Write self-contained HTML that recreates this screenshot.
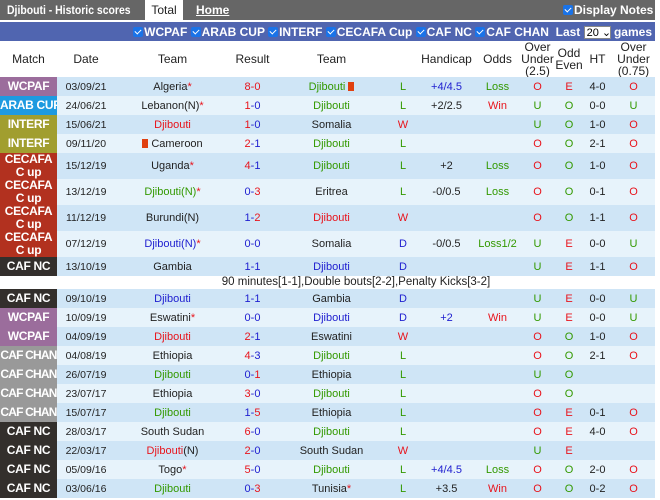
<!DOCTYPE html>
<html><head><meta charset="utf-8"><style>
*{margin:0;padding:0;box-sizing:border-box}
body{width:660px;height:500px;overflow:hidden;background:#fff;font-family:"Liberation Sans",Arial,sans-serif;font-size:11px;color:#222;position:relative}
.top{position:absolute;left:0;top:0;width:655px;height:20px;background:#666;color:#fff;font-weight:bold;font-size:12px}
.top .t{position:absolute;left:7px;top:3px;transform:scaleX(0.87);transform-origin:left;white-space:nowrap}
.top .tab{position:absolute;left:145px;top:0;width:38px;height:21px;background:#fff;color:#222;text-align:center;line-height:20px;font-weight:normal}
.top .home{position:absolute;left:196px;top:3px;text-decoration:underline}
.top .dn{position:absolute;left:563px;top:3px}
.cb{display:inline-block;width:10px;height:10px;background:#1a73e8;border-radius:2px;vertical-align:-1px;margin-right:1px;position:relative}
.cb:after{content:"";position:absolute;left:3px;top:1px;width:3px;height:5px;border:solid #fff;border-width:0 1.5px 1.5px 0;transform:rotate(45deg)}
.flt{position:absolute;left:0;top:22px;width:655px;height:19px;background:#5065b0;color:#fff;font-weight:bold;font-size:12px;white-space:nowrap}
.flt .in{position:absolute;right:3px;top:3px}
.sel{display:inline-block;background:#fff;color:#000;font-weight:normal;width:27px;height:13px;line-height:12px;border:1px solid #888;padding-left:2px;font-size:11px;vertical-align:0}
table{position:absolute;left:0;top:41px;width:655px;border-collapse:collapse;table-layout:fixed}
td,th{text-align:center;padding:0;overflow:hidden;white-space:nowrap}
th{height:36px;font-weight:normal;font-size:12px;line-height:12px;background:#fff}
tr.r td{height:19px}
tr.d td{height:26px}
tr:nth-child(even) td{background:#cfe5f6}
tr:nth-child(odd) td{background:#e7f3fb}
td.m{color:#fff;font-weight:bold;font-size:12px;line-height:13px;letter-spacing:-0.3px}
tr td.w{background:#9b6d9c}tr td.a{background:#1e9ae0}tr td.i{background:#a19e2f}tr td.c{background:#b2311f;white-space:normal}tr td.n{background:#332f2c}tr td.h{background:#999;letter-spacing:-0.8px}
tr.note td{background:#fff!important;height:13px;font-size:11.5px;line-height:13px}
.R{color:#e8141c}.B{color:#2020d0}.G{color:#339900}.dt{font-size:10.5px}
.mk{display:inline-block;width:6px;height:9px;background:#e04010;vertical-align:-1px;margin-left:3px}
</style></head><body>
<div class="top"><span class="t">Djibouti - Historic scores</span><span class="tab">Total</span><span class="home">Home</span><span class="dn"><span class="cb"></span>Display Notes</span></div>
<div class="flt"><div class="in"><span class="cb"></span>WCPAF <span class="cb"></span>ARAB CUP <span class="cb"></span>INTERF <span class="cb"></span>CECAFA Cup <span class="cb"></span>CAF NC <span class="cb"></span>CAF CHAN &nbsp;Last <span class="sel">20 ⌄</span> games</div></div>
<table>
<colgroup><col style="width:57px"><col style="width:58px"><col style="width:115px"><col style="width:45px"><col style="width:113px"><col style="width:30px"><col style="width:57px"><col style="width:45px"><col style="width:35px"><col style="width:28px"><col style="width:29px"><col style="width:43px"></colgroup>
<tr><th>Match</th><th>Date</th><th>Team</th><th>Result</th><th>Team</th><th></th><th>Handicap</th><th>Odds</th><th>Over<br>Under<br>(2.5)</th><th>Odd<br>Even</th><th>HT</th><th>Over<br>Under<br>(0.75)</th></tr>
<tr class="r"><td class="m w">WCPAF</td><td class="dt">03/09/21</td><td>Algeria<span class="R">*</span></td><td><span class="R">8-0</span></td><td class="G">Djibouti<span class="mk"></span></td><td class="G">L</td><td class="B">+4/4.5</td><td class="G">Loss</td><td class="R">O</td><td class="R">E</td><td>4-0</td><td class="R">O</td></tr>
<tr class="r"><td class="m a">ARAB CUP</td><td class="dt">24/06/21</td><td>Lebanon(N)<span class="R">*</span></td><td><span class="R">1</span><span class="B">-0</span></td><td class="G">Djibouti</td><td class="G">L</td><td>+2/2.5</td><td class="R">Win</td><td class="G">U</td><td class="G">O</td><td>0-0</td><td class="G">U</td></tr>
<tr class="r"><td class="m i">INTERF</td><td class="dt">15/06/21</td><td class="R">Djibouti</td><td><span class="R">1</span><span class="B">-0</span></td><td>Somalia</td><td class="R">W</td><td></td><td></td><td class="G">U</td><td class="G">O</td><td>1-0</td><td class="R">O</td></tr>
<tr class="r"><td class="m i">INTERF</td><td class="dt">09/11/20</td><td><span class="mk" style="margin:0 3px 0 0"></span>Cameroon</td><td><span class="R">2</span><span class="B">-1</span></td><td class="G">Djibouti</td><td class="G">L</td><td></td><td></td><td class="R">O</td><td class="G">O</td><td>2-1</td><td class="R">O</td></tr>
<tr class="d"><td class="m c">CECAFA C up</td><td class="dt">15/12/19</td><td>Uganda<span class="R">*</span></td><td><span class="R">4</span><span class="B">-1</span></td><td class="G">Djibouti</td><td class="G">L</td><td>+2</td><td class="G">Loss</td><td class="R">O</td><td class="G">O</td><td>1-0</td><td class="R">O</td></tr>
<tr class="d"><td class="m c">CECAFA C up</td><td class="dt">13/12/19</td><td><span class="G">Djibouti(N)</span><span class="R">*</span></td><td><span class="B">0-</span><span class="R">3</span></td><td>Eritrea</td><td class="G">L</td><td>-0/0.5</td><td class="G">Loss</td><td class="R">O</td><td class="G">O</td><td>0-1</td><td class="R">O</td></tr>
<tr class="d"><td class="m c">CECAFA C up</td><td class="dt">11/12/19</td><td>Burundi(N)</td><td><span class="B">1-</span><span class="R">2</span></td><td class="R">Djibouti</td><td class="R">W</td><td></td><td></td><td class="R">O</td><td class="G">O</td><td>1-1</td><td class="R">O</td></tr>
<tr class="d"><td class="m c">CECAFA C up</td><td class="dt">07/12/19</td><td><span class="B">Djibouti(N)</span><span class="R">*</span></td><td class="B">0-0</td><td>Somalia</td><td class="B">D</td><td>-0/0.5</td><td class="G">Loss1/2</td><td class="G">U</td><td class="R">E</td><td>0-0</td><td class="G">U</td></tr>
<tr class="r"><td class="m n">CAF NC</td><td class="dt">13/10/19</td><td>Gambia</td><td class="B">1-1</td><td class="B">Djibouti</td><td class="B">D</td><td></td><td></td><td class="G">U</td><td class="R">E</td><td>1-1</td><td class="R">O</td></tr>
<tr class="note"><td></td><td colspan="11">90 minutes[1-1],Double bouts[2-2],Penalty Kicks[3-2]</td></tr>
<tr class="r"><td class="m n">CAF NC</td><td class="dt">09/10/19</td><td class="B">Djibouti</td><td class="B">1-1</td><td>Gambia</td><td class="B">D</td><td></td><td></td><td class="G">U</td><td class="R">E</td><td>0-0</td><td class="G">U</td></tr>
<tr class="r"><td class="m w">WCPAF</td><td class="dt">10/09/19</td><td>Eswatini<span class="R">*</span></td><td class="B">0-0</td><td class="B">Djibouti</td><td class="B">D</td><td class="B">+2</td><td class="R">Win</td><td class="G">U</td><td class="R">E</td><td>0-0</td><td class="G">U</td></tr>
<tr class="r"><td class="m w">WCPAF</td><td class="dt">04/09/19</td><td class="R">Djibouti</td><td><span class="R">2</span><span class="B">-1</span></td><td>Eswatini</td><td class="R">W</td><td></td><td></td><td class="R">O</td><td class="G">O</td><td>1-0</td><td class="R">O</td></tr>
<tr class="r"><td class="m h">CAF CHAN</td><td class="dt">04/08/19</td><td>Ethiopia</td><td><span class="R">4</span><span class="B">-3</span></td><td class="G">Djibouti</td><td class="G">L</td><td></td><td></td><td class="R">O</td><td class="G">O</td><td>2-1</td><td class="R">O</td></tr>
<tr class="r"><td class="m h">CAF CHAN</td><td class="dt">26/07/19</td><td class="G">Djibouti</td><td><span class="B">0-</span><span class="R">1</span></td><td>Ethiopia</td><td class="G">L</td><td></td><td></td><td class="G">U</td><td class="G">O</td><td></td><td></td></tr>
<tr class="r"><td class="m h">CAF CHAN</td><td class="dt">23/07/17</td><td>Ethiopia</td><td><span class="R">3</span><span class="B">-0</span></td><td class="G">Djibouti</td><td class="G">L</td><td></td><td></td><td class="R">O</td><td class="G">O</td><td></td><td></td></tr>
<tr class="r"><td class="m h">CAF CHAN</td><td class="dt">15/07/17</td><td class="G">Djibouti</td><td><span class="B">1-</span><span class="R">5</span></td><td>Ethiopia</td><td class="G">L</td><td></td><td></td><td class="R">O</td><td class="R">E</td><td>0-1</td><td class="R">O</td></tr>
<tr class="r"><td class="m n">CAF NC</td><td class="dt">28/03/17</td><td>South Sudan</td><td><span class="R">6</span><span class="B">-0</span></td><td class="G">Djibouti</td><td class="G">L</td><td></td><td></td><td class="R">O</td><td class="R">E</td><td>4-0</td><td class="R">O</td></tr>
<tr class="r"><td class="m n">CAF NC</td><td class="dt">22/03/17</td><td><span class="R">Djibouti</span>(N)</td><td><span class="R">2</span><span class="B">-0</span></td><td>South Sudan</td><td class="R">W</td><td></td><td></td><td class="G">U</td><td class="R">E</td><td></td><td></td></tr>
<tr class="r"><td class="m n">CAF NC</td><td class="dt">05/09/16</td><td>Togo<span class="R">*</span></td><td><span class="R">5</span><span class="B">-0</span></td><td class="G">Djibouti</td><td class="G">L</td><td class="B">+4/4.5</td><td class="G">Loss</td><td class="R">O</td><td class="G">O</td><td>2-0</td><td class="R">O</td></tr>
<tr class="r"><td class="m n">CAF NC</td><td class="dt">03/06/16</td><td class="G">Djibouti</td><td><span class="B">0-</span><span class="R">3</span></td><td>Tunisia<span class="R">*</span></td><td class="G">L</td><td>+3.5</td><td class="R">Win</td><td class="R">O</td><td class="G">O</td><td>0-2</td><td class="R">O</td></tr>
</table>
</body></html>
